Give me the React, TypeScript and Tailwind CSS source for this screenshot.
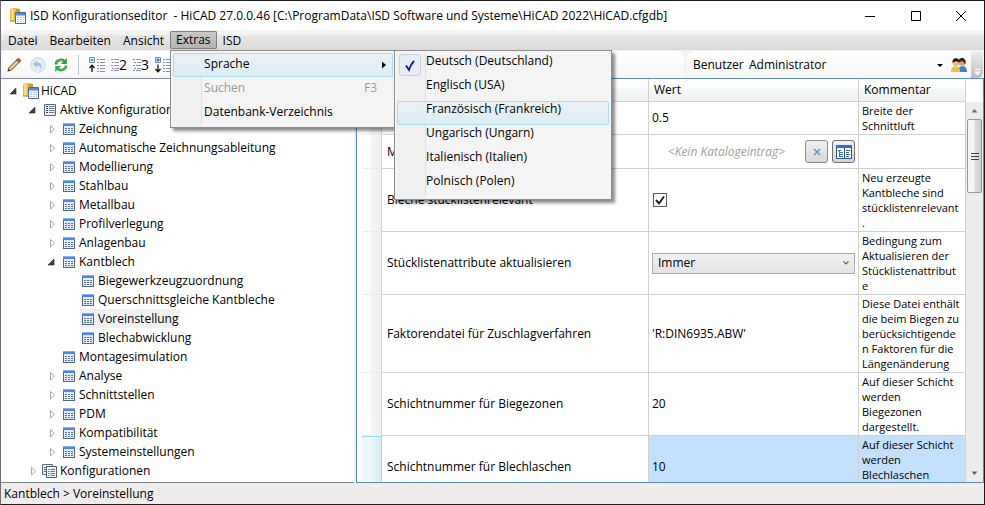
import { useState } from "react";
import type { ReactNode } from "react";

const languages = [
    "Deutsch (Deutschland)",
    "Englisch (USA)",
    "Französisch (Frankreich)",
    "Ungarisch (Ungarn)",
    "Italienisch (Italien)",
    "Polnisch (Polen)",
];

type Node = { label: string; level: number; state: "open" | "closed" | "leaf"; icon: "db" | "list" | "table" | "stack" };

const nodes: Node[] = [
    { label: "HiCAD", level: 0, state: "open", icon: "db" },
    { label: "Aktive Konfiguration", level: 1, state: "open", icon: "list" },
    { label: "Zeichnung", level: 2, state: "closed", icon: "table" },
    { label: "Automatische Zeichnungsableitung", level: 2, state: "closed", icon: "table" },
    { label: "Modellierung", level: 2, state: "closed", icon: "table" },
    { label: "Stahlbau", level: 2, state: "closed", icon: "table" },
    { label: "Metallbau", level: 2, state: "closed", icon: "table" },
    { label: "Profilverlegung", level: 2, state: "closed", icon: "table" },
    { label: "Anlagenbau", level: 2, state: "closed", icon: "table" },
    { label: "Kantblech", level: 2, state: "open", icon: "table" },
    { label: "Biegewerkzeugzuordnung", level: 3, state: "leaf", icon: "table" },
    { label: "Querschnittsgleiche Kantbleche", level: 3, state: "leaf", icon: "table" },
    { label: "Voreinstellung", level: 3, state: "leaf", icon: "table" },
    { label: "Blechabwicklung", level: 3, state: "leaf", icon: "table" },
    { label: "Montagesimulation", level: 2, state: "leaf", icon: "table" },
    { label: "Analyse", level: 2, state: "closed", icon: "table" },
    { label: "Schnittstellen", level: 2, state: "closed", icon: "table" },
    { label: "PDM", level: 2, state: "closed", icon: "table" },
    { label: "Kompatibilität", level: 2, state: "closed", icon: "table" },
    { label: "Systemeinstellungen", level: 2, state: "closed", icon: "table" },
    { label: "Konfigurationen", level: 1, state: "closed", icon: "stack" },
];

const indent = ["pl-[3px]", "pl-[22px]", "pl-[41px]", "pl-[60px]"];

function DbIcon() {
    return <svg className="w-4 h-4 shrink-0" viewBox="0 0 16 16">
        <path d="M0 1.500C0 .5 2 0 4.500 0S10 .5 10 1.500V13H0z" fill="#e9bb45" />
        <path d="M6 1h4v12H6z" fill="#cf9a28" />
        <path d="M1.500 1h2v12h-2z" fill="#fbe698" />
        <path d="M0 13h5" stroke="#a97c1a" />
        <path d="M5.500 4.500h10v11h-10z" fill="#f4f9ff" stroke="#4d6d97" />
        <path d="M6 5h9v2.500H6z" fill="#4f8ae0" />
        <path d="M7 9.500h2M10 9.500h2M13 9.500h1M7 11.500h2M10 11.500h2M13 11.500h1M7 13.500h2M10 13.500h2M13 13.500h1" stroke="#b4c8e2" />
    </svg>;
}

function ListIcon() {
    return <svg className="w-4 h-4 shrink-0" viewBox="0 0 16 16">
        <path d="M2.500 2.500h11v11h-11z" fill="#eef3fb" stroke="#56688a" />
        <path d="M4 4.500h2M4 6.500h2M4 8.500h2M4 10.500h2" stroke="#2c4674" />
        <path d="M7 4.500h5.500M7 6.500h5.500M7 8.500h5.500M7 10.500h5.500" stroke="#6a7f9f" />
    </svg>;
}

function TableIcon() {
    return <svg className="w-4 h-4 shrink-0" viewBox="0 0 16 16">
        <path d="M2 2h12v12H2z" fill="#4a6796" />
        <path d="M3 5h10v8H3z" fill="#e6eefb" />
        <path d="M2 2h12v3H2z" fill="#4c86e8" />
        <path d="M2 2h12v1H2z" fill="#86aff2" />
        <path d="M4 7.500h2M7 7.500h2M10 7.500h2M4 9.500h2M7 9.500h2M10 9.500h2M4 11.500h2M7 11.500h2M10 11.500h2" stroke="#5c6f94" />
    </svg>;
}

function StackIcon() {
    return <svg className="w-4 h-4 shrink-0" viewBox="0 0 16 16">
        <path d="M.5 1.500h10v10H.5z" fill="#e9eef5" stroke="#5d6c80" />
        <path d="M2 4.500h2M2 6.500h2M2 8.500h2" stroke="#5d6c80" />
        <path d="M4.500 3.500h10v11h-10z" fill="#f2f6fb" stroke="#4b5b70" />
        <path d="M6 6.500h1.500M8.500 6.500H13M6 8.500h1.500M8.500 8.500H13M6 10.500h1.500M8.500 10.500H13M6 12.500h1.500M8.500 12.500H13" stroke="#66778f" />
    </svg>;
}

function NodeIcon({ icon }: { icon: Node["icon"] }) {
    if (icon === "db") return <DbIcon />;
    if (icon === "list") return <ListIcon />;
    if (icon === "stack") return <StackIcon />;
    return <TableIcon />;
}

function Expander({ state }: { state: Node["state"] }) {
    return <svg className="w-[19px] h-4 shrink-0" viewBox="0 0 19 16">
        {state === "open" && <path d="M12 5v6H6z" fill="#404040" stroke="#262626" strokeWidth=".6" />}
        {state === "closed" && <path d="M8.500 4.500v7.500l4-3.750z" fill="#fff" stroke="#a8a8a8" />}
    </svg>;
}

function PencilIcon() {
    return <svg className="w-4 h-4" viewBox="0 0 16 16">
        <path d="M2 14l1-3.500L11 2.500l2.500 2.500-8 8z" fill="#e9b96a" stroke="#5a4424" strokeWidth=".9" />
        <path d="M4.500 11.500l7.500-7.500" stroke="#fbe2ae" />
        <path d="M10.500 3l1.300-1.300c1.200-.8 3.300 1.200 2.500 2.500L13 5.500z" fill="#c2604a" stroke="#6b3a2c" strokeWidth=".7" />
        <path d="M1.500 14.500l.7-2.200 1.500 1.500z" fill="#222" />
    </svg>;
}

function UndoIcon() {
    return <svg className="w-4 h-4" viewBox="0 0 16 16">
        <circle cx="8" cy="8" r="7.300" fill="#e6edf6" stroke="#cbd6e4" />
        <path d="M7 3.500L3 7l4 3.500V8.500c2.500 0 3.500 1 3.500 4 2.500-3.500 1-7-3.500-7z" fill="#9fc0e4" />
    </svg>;
}

function RefreshIcon() {
    return <svg className="w-4 h-4" viewBox="0 0 16 16" fill="none">
        <path d="M3 7.500C3 3 8.500 1.500 11.500 4.500" stroke="#2f9a3e" strokeWidth="2.600" />
        <path d="M13.800 1v6H8z" fill="#2f9a3e" />
        <path d="M13 8.500c0 4.500-5.500 6-8.500 3" stroke="#3dae4c" strokeWidth="2.600" />
        <path d="M2.200 15V9H8z" fill="#3dae4c" />
        <path d="M3.500 6C4.500 3 8 2.500 10.500 4.500" stroke="#8fdc8f" strokeWidth=".8" />
    </svg>;
}

function LevelIcon({ kind }: { kind: "minus" | "plus" }) {
    return <svg className="w-4 h-4" viewBox="0 0 16 16" fill="none">
        <path d="M.5.500h5v5h-5z" fill="#dceafa" stroke="#6d8fb5" />
        <path d="M1.500 3h3" stroke="#20456f" />
        {kind === "plus" && <path d="M3 1.500v3" stroke="#20456f" />}
        {kind === "minus"
            ? <path d="M3 15V9M.5 11L3 8.300 5.500 11" stroke="#111" strokeWidth="1.300" />
            : <path d="M3 7.500v6M.5 12L3 14.700 5.500 12" stroke="#111" strokeWidth="1.300" />}
        <path d="M8 2.500h2M11 2.500h5M8 5.500h2M11 5.500h5M8 8.500h2M11 8.500h5M8 11.500h2M11 11.500h5M8 14.500h2M11 14.500h5" stroke="#8493a8" />
    </svg>;
}

function NumberIcon({ n }: { n: string }) {
    return <span className="flex items-center w-4 h-4">
        <svg className="w-2 h-4 shrink-0" viewBox="0 0 8 16">
            <path d="M0 2.500h2M3 2.500h5M1 5.500h2M4 5.500h4M0 8.500h2M3 8.500h5M1 11.500h2M4 11.500h4M0 13.500h2M3 13.500h5" stroke="#8493a8" />
        </svg>
        <span className="text-sm leading-4 text-black">{n}</span>
    </span>;
}

function UsersIcon() {
    return <svg className="w-4 h-4" viewBox="0 0 16 16">
        <path d="M7 15c0-4 1.500-6 4.500-6s4.500 2 4.500 6z" fill="#3f7fd0" />
        <circle cx="11" cy="5.500" r="3.300" fill="#d9a06a" />
        <path d="M7.500 5.500C7.500 2 9 1 11 1s4 1.500 3.700 5l-1 1.500c0-2-1-3-3-3.500z" fill="#3a2412" />
        <path d="M0 15c0-4 1.500-5.500 4.500-5.500S9 11 9 15z" fill="#f0bd45" />
        <circle cx="5" cy="6" r="3.200" fill="#eab983" />
        <path d="M1.500 6C1.200 2.500 3 1.200 5 1.200S8.500 2.500 8.300 5.500C7 5 6 4.500 5.500 4 4 4.500 3 5 1.500 6z" fill="#26170c" />
    </svg>;
}

function BookIcon() {
    return <svg className="w-4 h-4" viewBox="0 0 16 16">
        <path d="M.5 1.500h15v13H.5z" fill="#fff" stroke="#2d5592" />
        <path d="M0 1h16v3H0z" fill="#2f6bd0" />
        <path d="M8.500 4v11" stroke="#2d5592" />
        <path d="M2 6.500h3M3.500 6v7M4 8.500h3M4 10.500h3M4 12.500h3M10 6.500h4M10 8.500h3M10 10.500h4M10 12.500h3" stroke="#3f6cb0" />
    </svg>;
}

function MenuItem({ children, active, disabled }: { children: ReactNode; active?: boolean; disabled?: boolean }) {
    return <button disabled={disabled} className={"flex w-full h-6 px-[5px] rounded-[2px] border text-left " + (active ? "border-[#a8dcf0] bg-linear-to-b from-[#e9f1f6]/80 to-[#d6ecf5]/80 " : "border-transparent ") + (disabled ? "text-[#9a9a9a]" : "text-black")}>
        {children}
    </button>;
}

function ExtrasMenu() {
    return <div className="absolute z-20 left-0 top-full w-[226px] h-[78px] p-0.5 border border-[#8e8e8e] bg-[#f4f4f4] shadow-[3px_3px_3px_rgba(0,0,0,0.45)]">
        <div className="absolute left-0.5 top-0.5 bottom-0.5 w-[29px] bg-[#f0f0f0] border-r border-[#e0e0e0]"></div>
        <div className="relative">
            <MenuItem active>
                <span className="flex-1 pl-[25px] leading-5">Sprache</span>
                <svg className="w-2 h-[22px]" viewBox="0 0 8 22"><path d="M3 7.500v7l4-3.500z" fill="#000" /></svg>
            </MenuItem>
            <MenuItem disabled>
                <span className="flex-1 pl-[25px] leading-5">Suchen</span>
                <span className="mr-2.5 leading-5">F3</span>
            </MenuItem>
            <MenuItem><span className="pl-[25px] leading-5">Datenbank-Verzeichnis</span></MenuItem>
        </div>

        <div className="absolute left-[223px] -top-px w-[218px] h-[150px] p-0.5 border border-[#8e8e8e] bg-[#f4f4f4] shadow-[3px_3px_3px_rgba(0,0,0,0.45)]">
            <div className="absolute left-0.5 top-0.5 bottom-0.5 w-[29px] bg-[#f0f0f0] border-r border-[#e0e0e0]"></div>
            <div className="absolute left-1 top-[3px] w-[22px] h-[22px] rounded-[3px] border border-[#c6cde4] bg-[#e6edf6]">
                <svg className="w-5 h-5" viewBox="0 0 20 20"><path d="M6 10.500l3 4.500c1-3.500 2.500-6.500 5-9" fill="none" stroke="#1414a0" strokeWidth="1.800" /></svg>
            </div>
            <div className="relative">
                {languages.map((l) => <MenuItem key={l} active={l.startsWith("Franz")}>
                    <span className="pl-[23px] leading-[14px]">{l}</span>
                </MenuItem>)}
            </div>
        </div>
    </div>;
}

function TitleBar() {
    return <div className="flex items-center h-[29px] shrink-0 bg-white">
        <span className="ml-[9px] mr-1"><DbIcon /></span>
        <h1 className="flex-1 whitespace-pre">{"ISD Konfigurationseditor  - HiCAD 27.0.0.46 [C:\\ProgramData\\ISD Software und Systeme\\HiCAD 2022\\HiCAD.cfgdb]"}</h1>
        <button aria-label="Minimieren" className="w-[46px] h-full flex items-center justify-center">
            <svg className="w-2.5 h-2.5" viewBox="0 0 10 10"><path d="M0 5.500h10" stroke="#000" /></svg>
        </button>
        <button aria-label="Maximieren" className="w-[45px] h-full flex items-center justify-center">
            <svg className="w-2.5 h-2.5" viewBox="0 0 10 10"><path d="M.5.500h9v9h-9z" fill="none" stroke="#000" /></svg>
        </button>
        <button aria-label="Schließen" className="w-[46px] h-full flex items-center justify-center">
            <svg className="w-2.5 h-2.5" viewBox="0 0 10 10"><path d="M0 0l10 10M10 0L0 10" stroke="#000" /></svg>
        </button>
    </div>;
}

function MenuBar() {
    return <div className="flex h-5 pl-px pt-px shrink-0 bg-linear-to-b from-[#f4f4f4] from-20% via-[#e7e6e5] via-30% to-[#dcdad9]">
        <button className="px-[5px] border-x border-transparent">Datei</button>
        <button className="px-[5px] border-x border-transparent">Bearbeiten</button>
        <button className="px-[5px] border-x border-transparent">Ansicht</button>
        <div className="relative">
            <button className="px-[5px] h-[18px] leading-4 border border-[#808080] rounded-[1px] bg-linear-to-b from-[#c9c9c9] to-[#b1b1b1]">Extras</button>
            <ExtrasMenu />
        </div>
        <button className="px-[5px] border-x border-transparent">ISD</button>
    </div>;
}

function ToolBar() {
    return <div className="flex h-7 pt-px shrink-0 bg-[#f3f3f3]">
        <div className="flex flex-1 items-center pl-[5px] bg-linear-to-b from-white to-[#f7f7f8] rounded-r-md">
            <button aria-label="Bearbeiten"><PencilIcon /></button>
            <button aria-label="Rückgängig" className="ml-2"><UndoIcon /></button>
            <button aria-label="Aktualisieren" className="ml-[7px]"><RefreshIcon /></button>
            <div className="w-px h-5 ml-[9px] mr-2.5 bg-[#c4c4c4]"></div>
            <div className="flex gap-1.5">
                <button aria-label="Ebene 1"><LevelIcon kind="minus" /></button>
                <button aria-label="Ebene 2"><NumberIcon n="2" /></button>
                <button aria-label="Ebene 3"><NumberIcon n="3" /></button>
                <button aria-label="Alle Ebenen"><LevelIcon kind="plus" /></button>
            </div>
        </div>
        <div className="flex items-center ml-[3px] w-[284px] pl-1.5 bg-linear-to-b from-white to-[#f7f7f8] rounded-l-md">
            <label htmlFor="user" className="w-[51px]">Benutzer</label>
            <div className="relative flex-1 mr-1">
                <select id="user" className="w-full h-5 pl-[5px] appearance-none bg-transparent" defaultValue="Administrator">
                    <option>Administrator</option>
                </select>
                <svg className="absolute right-0.5 top-0 w-2.5 h-5 pointer-events-none" viewBox="0 0 10 20"><path d="M2 9h6l-3 3z" fill="#000" /></svg>
            </div>
            <button aria-label="Benutzerverwaltung" className="mr-1"><UsersIcon /></button>
        </div>
        <div className="w-3 mr-px rounded-r-md bg-linear-to-b from-[#efefef] to-[#bdbdbd]">
            <svg className="w-3 h-[27px]" viewBox="0 0 12 27"><path d="M4 18.500h5M4 21h5l-2.500 3z" stroke="#fff" fill="#fff" /></svg>
        </div>
    </div>;
}

function Tree() {
    const [selected, setSelected] = useState("Voreinstellung");

    return <ul className="flex-none w-[353px] pt-0.5 bg-white border-t border-b border-[#7f8792] overflow-hidden">
        {nodes.map((n) => <li key={n.label} className={"flex items-center h-[19px] " + indent[n.level]}>
            <Expander state={n.state} />
            <button onClick={() => setSelected(n.label)} className={"flex items-center gap-0.5 h-[19px] pr-0.5 whitespace-nowrap " + (selected === n.label ? "bg-[#f0f0f0]" : "")}>
                <NodeIcon icon={n.icon} />
                {n.label}
            </button>
        </li>)}
    </ul>;
}

function Row({ name, comment, height, selected, children }: { name: string; comment: string[]; height: string; selected?: boolean; children: ReactNode }) {
    const line = " border-b border-[#d0d0d0]";
    const bg = selected ? " bg-[#c3e0ff]" : "";

    return <tr className={height}>
        <td className={selected
            ? "border-t border-r border-[#99d9f5] bg-linear-to-r from-[#eff9fd] from-40% to-[#d3ecf6]"
            : "border-r border-b border-[#d0d0d0] border-b-[#ececec] bg-linear-to-r from-white from-40% via-[#f4f5f6] via-45% to-[#eeeff1]"}></td>
        <td className={"pl-[5px] border-r" + line}>{name}</td>
        <td className={"px-[3px] border-r" + line + bg}>{children}</td>
        <td className={"pl-[3px] align-top pt-px border-r text-[11px] leading-[15px] whitespace-nowrap" + line + bg}>
            {comment.map((c) => <div key={c}>{c}</div>)}
        </td>
    </tr>;
}

function ValueTable() {
    const [relevant, setRelevant] = useState(true);
    const head = "font-normal text-left pl-[5px] border-r border-b border-[#d0d0d0] bg-linear-to-b from-white from-40% via-[#f6f7f8] via-45% to-[#f1f2f4]";

    return <table className="w-full table-fixed border-separate border-spacing-0">
        <colgroup>
            <col className="w-5" />
            <col className="w-[267px]" />
            <col />
            <col className="w-[107px]" />
        </colgroup>
        <thead>
            <tr className="h-[23px]">
                <th className={head}></th>
                <th className={head}></th>
                <th className={head}>Wert</th>
                <th className={head}>Kommentar</th>
            </tr>
        </thead>
        <tbody>
            <Row name="" height="h-[33px]" comment={["Breite der", "Schnittluft"]}>0.5</Row>
            <Row name="M" height="h-[34px]" comment={[]}>
                <div className="flex items-center gap-1">
                    <i className="flex-1 text-center text-[#a0a0a0] whitespace-nowrap">&lt;Kein Katalogeintrag&gt;</i>
                    <button aria-label="Eintrag entfernen" className="flex items-center justify-center w-[23px] h-[23px] rounded-[3px] border border-[#8a8a8a] bg-linear-to-b from-[#f0f0f0] to-[#d8d8d8]">
                        <svg className="w-2 h-2" viewBox="0 0 8 8"><path d="M1 1l6 6M7 1L1 7" stroke="#4d8fc4" strokeWidth="1.200" /></svg>
                    </button>
                    <button aria-label="Katalog" className="flex items-center justify-center w-[23px] h-[23px] rounded-[3px] border border-[#707070] bg-linear-to-b from-[#f2f2f2] to-[#d4d4d4]"><BookIcon /></button>
                </div>
            </Row>
            <Row name="Bleche stücklistenrelevant" height="h-[63px]" comment={["Neu erzeugte", "Kantbleche sind", "stücklistenrelevant", "."]}>
                <div className="relative w-[14px] h-[14px] ml-px">
                    <input type="checkbox" aria-label="Bleche stücklistenrelevant" checked={relevant} onChange={(e) => setRelevant(e.target.checked)} className="block w-[14px] h-[14px] appearance-none border border-[#5a5a5a] bg-white" />
                    {relevant && <svg className="absolute inset-0 w-[14px] h-[14px] pointer-events-none" viewBox="0 0 14 14"><path d="M3 7l3 3.500L11 3.500" fill="none" stroke="#212121" strokeWidth="2" /></svg>}
                </div>
            </Row>
            <Row name="Stücklistenattribute aktualisieren" height="h-[63px]" comment={["Bedingung zum", "Aktualisieren der", "Stücklistenattribut", "e"]}>
                <div className="relative">
                    <select aria-label="Stücklistenattribute aktualisieren" className="block w-full h-[21px] pl-[5px] appearance-none border border-[#acacac] bg-linear-to-b from-[#f0f0f0] to-[#e4e4e4]">
                        <option>Immer</option>
                        <option>Nie</option>
                    </select>
                    <svg className="absolute right-[5px] top-0 w-2 h-[21px] pointer-events-none" viewBox="0 0 8 21"><path d="M1.500 8.500L4 11l2.500-2.500" fill="none" stroke="#606060" strokeWidth="1.200" /></svg>
                </div>
            </Row>
            <Row name="Faktorendatei für Zuschlagverfahren" height="h-[78px]" comment={["Diese Datei enthält", "die beim Biegen zu", "berücksichtigende", "n Faktoren für die", "Längenänderung"]}>'R:DIN6935.ABW'</Row>
            <Row name="Schichtnummer für Biegezonen" height="h-[63px]" comment={["Auf dieser Schicht", "werden", "Biegezonen", "dargestellt."]}>20</Row>
            <Row name="Schichtnummer für Blechlaschen" height="h-[63px]" selected comment={["Auf dieser Schicht", "werden", "Blechlaschen"]}>10</Row>
        </tbody>
    </table>;
}

function ScrollBar() {
    return <div className="flex flex-col w-[17px] shrink-0 pt-[23px]">
        <div className="flex flex-col flex-1 items-center bg-[#ececec]">
            <svg className="w-[17px] h-[17px] shrink-0" viewBox="0 0 17 17"><path d="M5.500 10.500h6l-3-3.500z" fill="#707070" /></svg>
            <div className="flex flex-col items-center justify-center gap-0.5 w-[15px] h-[74px] rounded-[2px] border border-[#979797] bg-linear-to-r from-[#f5f5f5] from-45% via-[#dcdcdc] via-55% to-[#cfcfcf]">
                <div className="w-2 h-px bg-[#404040]"></div>
                <div className="w-2 h-px bg-[#404040]"></div>
                <div className="w-2 h-px bg-[#404040]"></div>
            </div>
            <svg className="w-[17px] h-[17px] shrink-0 mt-auto" viewBox="0 0 17 17"><path d="M5.500 6.500h6l-3 3.500z" fill="#606060" /></svg>
        </div>
    </div>;
}

function App() {
    return <div className="flex flex-col h-screen overflow-hidden border border-[#1c1c22] border-l-[#6e6e74] bg-[#f0ecec] font-['Open_Sans','Noto_Sans',sans-serif] text-[12px] leading-4 text-black">
        <TitleBar />
        <MenuBar />
        <ToolBar />
        <div className="flex flex-1 min-h-0">
            <Tree />
            <div className="w-0.5 bg-[#f0f0f0]"></div>
            <div className="flex flex-1 min-w-0 pl-[5px] items-stretch bg-white border border-[#5f8ab5] overflow-hidden">
                <div className="flex-1 min-w-0 h-0"><ValueTable /></div>
                <ScrollBar />
            </div>
        </div>
        <div className="flex items-center h-[21px] px-[3px] shrink-0">Kantblech &gt; Voreinstellung</div>
    </div>;
}

export default App;
